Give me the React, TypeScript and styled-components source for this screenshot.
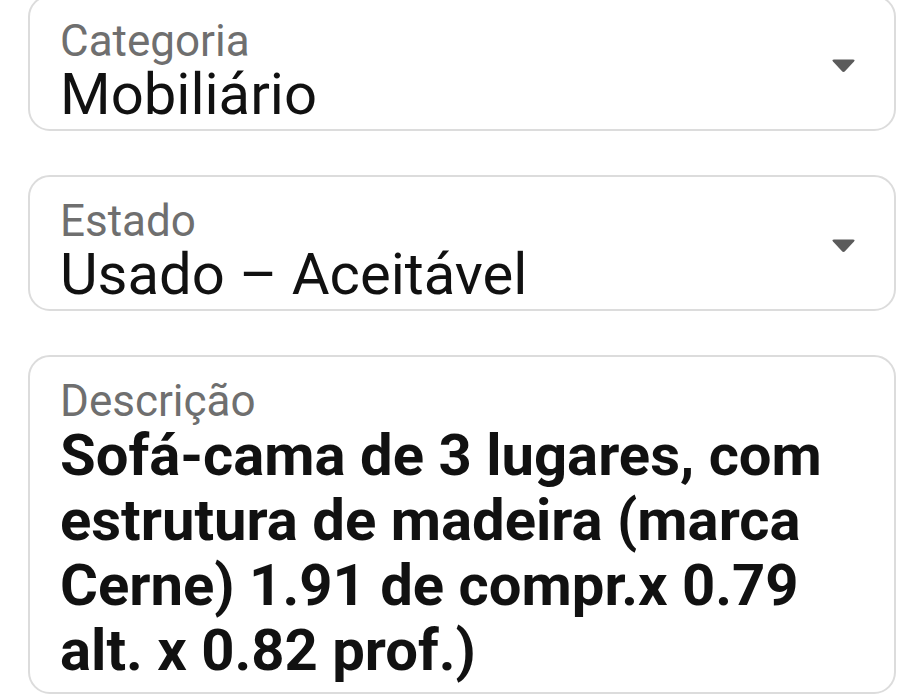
import React from "react";
import styled, { createGlobalStyle } from "styled-components";

const Global = createGlobalStyle`
  html, body { margin: 0; padding: 0; background: #ffffff; }
  body { font-family: Roboto, "Noto Sans", "Liberation Sans", sans-serif; overflow: hidden; }
`;

const Page = styled.div`
  display: flex;
  flex-direction: column;
  gap: 44px;
  padding: 0 28px;
  margin-top: -5px;
`;

const Field = styled.div<{ $tall?: boolean }>`
  display: flex;
  align-items: center;
  border: 2px solid #dcdcdc;
  border-radius: 22px;
  padding: 22px 38px ${(p) => (p.$tall ? "9px" : "4px")} 30px;
  background: #fff;
`;

const Body = styled.div`
  flex: 1;
  min-width: 0;
`;

const Label = styled.div`
  font-size: 44px;
  line-height: 44px;
  color: #6f6f6f;
  font-weight: 400;
`;

const Value = styled.div`
  font-size: 58px;
  line-height: 62px;
  color: #111;
  font-weight: 400;
  white-space: nowrap;
`;

const Description = styled.div`
  font-size: 58px;
  line-height: 65px;
  color: #111;
  font-weight: 700;
  white-space: nowrap;
`;

const Caret = styled.svg`
  width: 25px;
  height: 15px;
  margin-bottom: 13px;
  flex-shrink: 0;
`;

const Arrow = () => (
  <Caret viewBox="0 0 25 15">
    <path
      d="M3 1.5 H22 Q24.5 1.5 23 3.6 L14.2 13 Q12.5 14.8 10.8 13 L2 3.6 Q0.5 1.5 3 1.5 Z"
      fill="#5b5b5b"
    />
  </Caret>
);

export default function App() {
  return (
    <>
      <Global />
      <Page>
        <Field>
          <Body>
            <Label>Categoria</Label>
            <Value>Mobiliário</Value>
          </Body>
          <Arrow />
        </Field>
        <Field>
          <Body>
            <Label>Estado</Label>
            <Value>Usado – Aceitável</Value>
          </Body>
          <Arrow />
        </Field>
        <Field $tall>
          <Body>
            <Label>Descrição</Label>
            <Description>
              Sofá-cama de 3 lugares, com
              <br />
              estrutura de madeira (marca
              <br />
              Cerne) 1.91 de compr.x 0.79
              <br />
              alt. x 0.82 prof.)
            </Description>
          </Body>
        </Field>
      </Page>
    </>
  );
}
